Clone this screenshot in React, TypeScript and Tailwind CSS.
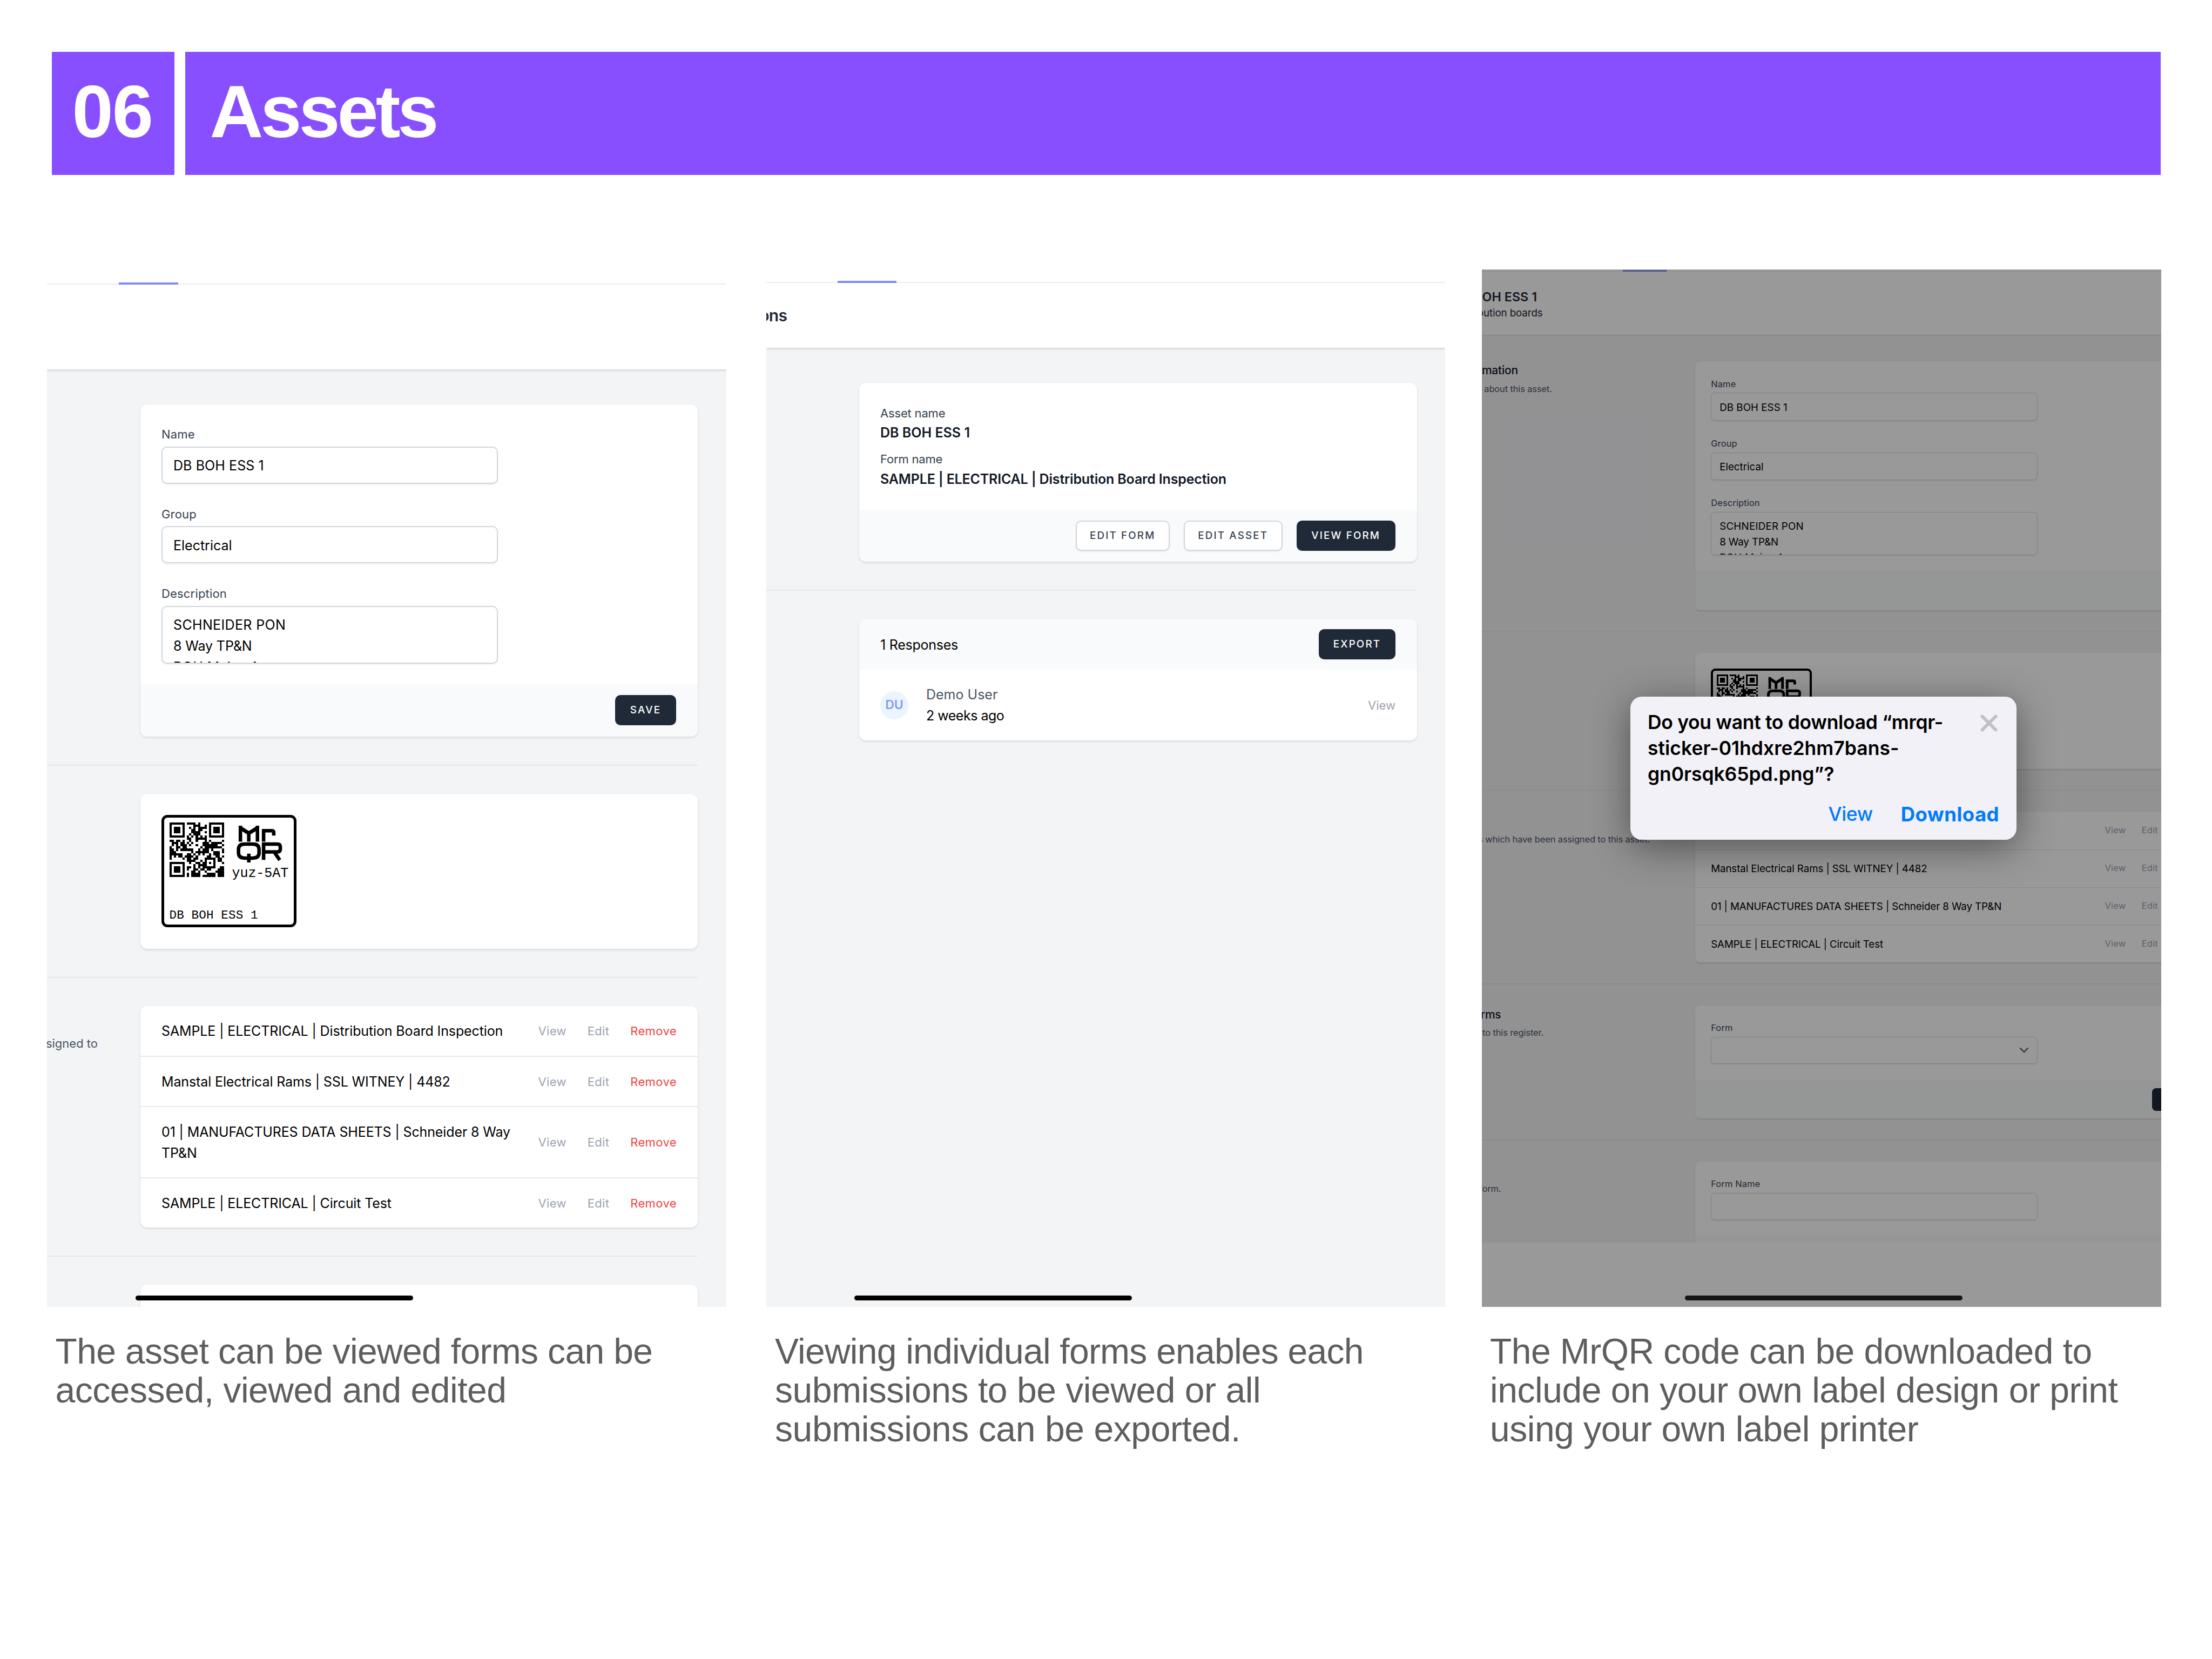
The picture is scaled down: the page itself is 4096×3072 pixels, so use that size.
import type { ReactNode } from "react";

const QR_ROWS: number[][] = [
  [8, 9, 10, 11, 13],
  [11, 12, 13, 16],
  [9, 11, 13, 14, 15, 16],
  [10, 11, 13, 14],
  [10, 11, 12, 13, 16],
  [9, 11, 12, 13],
  [8, 10, 12, 14, 16],
  [8, 9, 12, 13, 14, 15, 16],
  [0, 1, 3, 4, 6, 9, 12, 16, 18, 24],
  [1, 2, 3, 5, 6, 8, 10, 15, 16, 17, 19, 20, 21, 22, 23],
  [1, 3, 5, 6, 7, 9, 12, 15, 16, 17, 18, 19, 20, 21, 24],
  [0, 3, 4, 6, 7, 14, 16, 17, 18, 19, 20, 21, 22, 23],
  [0, 1, 3, 5, 6, 7, 8, 9, 10, 13, 15, 16, 17, 19, 24],
  [0, 1, 2, 10, 12, 13, 14, 15, 16, 17, 20, 21, 22, 24],
  [0, 1, 2, 3, 4, 5, 8, 9, 11, 13, 15, 18, 20, 21, 22],
  [0, 2, 4, 5, 7, 8, 9, 10, 12, 17, 18, 21, 22, 24],
  [0, 6, 8, 9, 11, 12, 16, 17, 18, 19, 20, 22, 23],
  [8, 9, 10, 11, 14, 16, 20, 22, 23],
  [9, 12, 13, 15, 16, 18, 20, 24],
  [11, 13, 14, 15, 16, 20],
  [8, 9, 11, 13, 15, 16, 17, 18, 19, 20, 23, 24],
  [8, 11, 12, 14, 15, 17, 18, 22, 23, 24],
  [10, 11, 13, 16, 21, 22, 23, 24],
  [8, 10, 11, 12, 13, 17, 18, 19, 20, 22, 23, 24],
  [8, 10, 11, 12, 13, 15, 16, 17, 18, 19, 20, 22, 23, 24],
];

function Finder({ x, y }: { x: number; y: number }) {
  return (
    <g>
      <rect x={x + 0.5} y={y + 0.5} width={6} height={6} fill="none" stroke="#000" strokeWidth={1} />
      <rect x={x + 2} y={y + 2} width={3} height={3} />
    </g>
  );
}

function QrCode() {
  return (
    <svg viewBox="0 0 25 25" className="size-[101px] shrink-0" shapeRendering="crispEdges">
      <Finder x={0} y={0} />
      <Finder x={18} y={0} />
      <Finder x={0} y={18} />
      {QR_ROWS.map((cols, y) => cols.map((x) => <rect key={`${x}-${y}`} x={x} y={y} width={1} height={1} />))}
    </svg>
  );
}

function MrQrLogo() {
  return (
    <svg viewBox="562 124 320 256" className="h-[69.6px] w-[87px] shrink-0" fill="none" stroke="#000" strokeWidth={24}>
      <path d="M592 236V128M708 236V128M649 236V174" />
      <path d="M586 139L649 179L714 139" strokeWidth={26} />
      <path d="M750 236V162H806Q819 162 819 175V195" />
      <path d="M620 253H678Q719 253 719 290V311Q719 348 678 348H620Q579 348 579 311V290Q579 253 620 253Z" />
      <path d="M649.500 318V378" />
      <path d="M750 360V253H842Q864 253 864 272V287Q864 306 842 306H752M822 306L860 362" />
    </svg>
  );
}

function Sticker() {
  return (
    <div className="flex h-[208.600px] w-[250px] flex-col rounded-[11px] border-[5.500px] border-black bg-white font-['Liberation_Mono',monospace]">
      <div className="flex pt-[9px] pl-[9.500px]">
        <QrCode />
        <div className="ml-[15px] flex w-[106px] flex-col">
          <div className="pt-[5px] pl-[7px]">
            <MrQrLogo />
          </div>
          <div className="mt-[3px] text-[25px] leading-[36px] tracking-[-0.002em] whitespace-nowrap">yuz-5AT</div>
        </div>
      </div>
      <div className="mt-auto pb-[2px] pl-[9.500px] text-[22.500px] leading-[30px] tracking-[0.008em] whitespace-nowrap">DB BOH ESS 1</div>
    </div>
  );
}

const CARD = "shrink-0 overflow-hidden rounded-[13px] bg-white";
const CARD_SHADOW = "shrink-0 rounded-[13px] shadow-[0_2px_4px_rgba(0,0,0,0.12)]";

function Card({ className, children }: { className: string; children: ReactNode }) {
  return (
    <div className={CARD_SHADOW}>
      <div className={`${CARD} ${className}`}>{children}</div>
    </div>
  );
}

function Divider({ className = "mr-[53px]" }: { className?: string }) {
  return (
    <div className={`flex h-[106px] shrink-0 items-center ${className}`}>
      <div className="h-[2px] w-full bg-[#e5e7eb]" />
    </div>
  );
}

function DarkButton({ children, className }: { children?: ReactNode; className: string }) {
  return (
    <div className={`flex h-[56px] items-center justify-center rounded-[10px] bg-[#1f2937] pt-px text-[18.800px] font-[550] tracking-[0.115em] whitespace-nowrap text-white ${className}`}>
      {children}
    </div>
  );
}

function LightButton({ children, className }: { children: ReactNode; className: string }) {
  return (
    <div className={`flex h-[56px] items-center justify-center rounded-[10px] border-2 border-[#d1d5db] bg-white pt-px text-[18.800px] font-[550] tracking-[0.115em] whitespace-nowrap text-[#374151] shadow-[0_2px_3px_rgba(0,0,0,0.06)] ${className}`}>
      {children}
    </div>
  );
}

function Label({ children }: { children: ReactNode }) {
  return <div className="pt-px text-[22px] leading-[32.500px] tracking-[0.008em] text-[#374151]">{children}</div>;
}

const BOX = "mt-[6px] rounded-[10px] border-2 border-[#d1d5db] bg-white shadow-[0_2px_3px_rgba(0,0,0,0.06)]";

function Field({ label, value, width, tracking }: { label: string; value: string; width: string; tracking: string }) {
  return (
    <div>
      <Label>{label}</Label>
      <div className={`${BOX} flex h-[69px] items-center px-[20px] pt-[4px] text-[25px] text-black ${tracking} ${width}`}>{value}</div>
    </div>
  );
}

function AssetFormCard({ card, input }: { card: string; input: string }) {
  return (
    <Card className={`h-[615px] ${card}`}>
      <div className="flex h-[518px] flex-col gap-[39px] px-[39px] pt-[38.500px]">
        <Field label="Name" value="DB BOH ESS 1" width={input} tracking="tracking-[0.003em]" />
        <Field label="Group" value="Electrical" width={input} tracking="tracking-[0em]" />
        <div>
          <Label>Description</Label>
          <div className={`${BOX} h-[107px] overflow-hidden px-[20px] pt-[14px] text-[25px] leading-[39px] tracking-[0.014em] text-black ${input}`}>
            <div>SCHNEIDER PON</div>
            <div className="tracking-[-0.005em]">8 Way TP&amp;N</div>
            <div>BOH Mains A</div>
          </div>
        </div>
      </div>
      <div className="flex h-[97px] items-center justify-end bg-[#f9fafb] pr-[40px]">
        <DarkButton className="w-[113px]">SAVE</DarkButton>
      </div>
    </Card>
  );
}

function StickerCard({ card }: { card: string }) {
  return (
    <Card className={`h-[287px] p-[39px] ${card}`}>
      <Sticker />
    </Card>
  );
}

function AssignedForms({ card, rows, divided }: { card: string; rows: string[]; divided: string }) {
  return (
    <Card className={card}>
      {rows.map((row, i) => (
        <div key={row} className={`flex items-center border-[#e5e7eb] px-[39px] ${i > 0 ? `border-t-2 ${divided}` : "pt-[26.500px] pb-[26px]"}`}>
          <div className="min-w-0 flex-1 pt-[1px] text-[25px] leading-[39px] tracking-[-0.005em] text-black">{row}</div>
          <div className="ml-[16px] flex gap-[39px] text-[22px] leading-[32px] tracking-[0.014em] text-[#9ca3af]">
            <span>View</span>
            <span>Edit</span>
            <span className="tracking-[0.018em] text-[#ef4444]">Remove</span>
          </div>
        </div>
      ))}
    </Card>
  );
}

function HomeBar({ color, left }: { color: string; left: string }) {
  return <div className={`absolute bottom-[12px] z-20 h-[9px] w-[514px] rounded-full ${color} ${left}`} />;
}

function Caption({ className, children }: { className: string; children: ReactNode }) {
  return (
    <div className={`mt-[46px] font-['Liberation_Sans',sans-serif] text-[66px] leading-[72.200px] whitespace-nowrap text-[#5e5e5e] ${className}`}>
      {children}
    </div>
  );
}

function AssetPanel() {
  return (
    <div className="relative flex h-[1921px] w-[1258px] flex-col overflow-hidden bg-white">
      <div className="flex h-[28px] shrink-0 items-end border-b-2 border-[#eeeff1]">
        <div className="relative top-[2px] ml-[133px] h-[4px] w-[110px] bg-[#818cf8]" />
      </div>
      <div className="z-10 h-[156.500px] shrink-0 bg-white shadow-[0_2px_4px_rgba(0,0,0,0.14)]" />
      <div className="flex grow flex-col bg-[#f3f4f6] pt-[65px]">
        <div className="flex justify-end pr-[53px]">
          <AssetFormCard card="w-[1032px]" input="w-[623px]" />
        </div>
        <Divider />
        <div className="flex justify-end pr-[53px]">
          <StickerCard card="w-[1032px]" />
        </div>
        <Divider />
        <div className="flex pr-[53px]">
          <div className="flex w-[173px] shrink-0 overflow-hidden">
            <div className="flex w-[94px] justify-end overflow-hidden pt-[53px] text-[22px] leading-[32px] whitespace-nowrap text-[#4b5563]">signed to</div>
          </div>
          <AssignedForms
            card="w-[1032px]"
            divided="py-[25.500px]"
            rows={[
              "SAMPLE | ELECTRICAL | Distribution Board Inspection",
              "Manstal Electrical Rams | SSL WITNEY | 4482",
              "01 | MANUFACTURES DATA SHEETS | Schneider 8 Way TP&N",
              "SAMPLE | ELECTRICAL | Circuit Test",
            ]}
          />
        </div>
        <Divider />
        <div className="flex justify-end pr-[53px]">
          <Card className="h-[200px] w-[1032px]">{null}</Card>
        </div>
      </div>
      <HomeBar color="bg-black" left="left-[164px]" />
    </div>
  );
}

function FormPanel() {
  return (
    <div className="relative flex h-[1921px] w-[1257px] flex-col overflow-hidden bg-white">
      <div className="flex h-[24.500px] shrink-0 items-end border-b-2 border-[#eeeff1]">
        <div className="relative top-[2px] ml-[132px] h-[4px] w-[109px] bg-[#818cf8]" />
      </div>
      <div className="z-10 flex h-[120.500px] shrink-0 bg-white pt-[38px] shadow-[0_2px_4px_rgba(0,0,0,0.14)]">
        <div className="flex h-[45px] w-[38.500px] justify-end overflow-hidden text-[30px] leading-[45px] font-semibold tracking-[-0.020em] text-[#1f2937]">ons</div>
      </div>
      <div className="flex grow flex-col bg-[#f3f4f6] pt-[65px]">
        <div className="flex justify-end pr-[52px]">
          <Card className="h-[330.500px] w-[1033px]">
            <div className="flex h-[235px] flex-col px-[39px] pt-[39.500px] text-[25px] leading-[39px] font-semibold tracking-[-0.007em] text-[#111827]">
              <div className="text-[22px] leading-[32.500px] font-normal text-[#374151]">Asset name</div>
              <div className="pt-px tracking-[0em]">DB BOH ESS 1</div>
              <div className="mt-[13px] text-[22px] leading-[32.500px] font-normal text-[#374151]">Form name</div>
              <div className="pt-px">SAMPLE | ELECTRICAL | Distribution Board Inspection</div>
            </div>
            <div className="flex h-[95.500px] items-center justify-end gap-[26px] bg-[#f9fafb] pr-[40px]">
              <LightButton className="w-[174.500px]">EDIT FORM</LightButton>
              <LightButton className="w-[182.500px]">EDIT ASSET</LightButton>
              <DarkButton className="w-[183.500px]">VIEW FORM</DarkButton>
            </div>
          </Card>
        </div>
        <Divider className="mr-[52px]" />
        <div className="flex justify-end pr-[52px]">
          <Card className="h-[225.500px] w-[1033px]">
            <div className="flex h-[94.500px] items-center justify-between bg-[#f9fafb] pr-[40px] pl-[39px]">
              <div className="pt-[3px] text-[25px] tracking-[-0.010em] text-black">1 Responses</div>
              <DarkButton className="w-[142px]">EXPORT</DarkButton>
            </div>
            <div className="flex h-[131px] items-center pr-[40px] pl-[39px]">
              <div className="flex size-[52px] items-center justify-center rounded-full bg-[#ebf4ff] text-[23px] font-semibold text-[#7f9cf5]">DU</div>
              <div className="ml-[33px] flex-1 pt-[1px] text-[25px] leading-[39px] text-black">
                <div className="text-[#4b5563]">Demo User</div>
                <div className="tracking-[-0.020em]">2 weeks ago</div>
              </div>
              <div className="pt-[1px] text-[22px] text-[#9ca3af]">View</div>
            </div>
          </Card>
        </div>
      </div>
      <HomeBar color="bg-black" left="left-[162.500px]" />
    </div>
  );
}

function SideNote({ title, titleWidth, note, noteWidth }: { title?: string; titleWidth?: string; note?: string; noteWidth?: string }) {
  return (
    <div className="w-[528px] shrink-0 whitespace-nowrap">
      <div className={`mt-[3px] flex h-[39px] justify-end overflow-hidden text-[28px] leading-[39px] font-medium tracking-[-0.010em] text-[#111827] ${titleWidth ?? ""}`}>{title}</div>
      <div className={`mt-[11px] flex justify-end overflow-hidden text-[22px] leading-[32px] tracking-[-0.008em] text-[#4b5563] ${noteWidth ?? ""}`}>{note}</div>
    </div>
  );
}

function DownloadPanel() {
  return (
    <div className="relative h-[1921px] w-[1258px] overflow-hidden bg-white">
      <div className="flex h-[2565px] w-[1680px] flex-col overflow-hidden [zoom:0.749]">
        <div className="flex h-[5px] shrink-0 items-end border-b-2 border-[#eeeff1]">
          <div className="relative top-[2px] ml-[349px] h-[4px] w-[108px] bg-[#818cf8]" />
        </div>
        <div className="z-10 h-[157px] shrink-0 bg-white pt-[43px] whitespace-nowrap shadow-[0_2px_4px_rgba(0,0,0,0.14)]">
          <div className="flex w-[137px] justify-end overflow-hidden text-[31px] leading-[42px] font-semibold tracking-[0.004em] text-[#1f2937]">OH ESS 1</div>
          <div className="flex w-[151px] justify-end overflow-hidden pt-px text-[25px] leading-[36px] tracking-[-0.005em] text-[#1f2937]">bution boards</div>
        </div>
        <div className="flex h-[2244px] shrink-0 flex-col overflow-hidden bg-[#f3f4f6] pt-[65px]">
          <div className="flex">
            <SideNote title="mation" titleWidth="w-[90px]" note="about this asset." noteWidth="w-[174px]" />
            <AssetFormCard card="w-[1308px]" input="w-[807px]" />
          </div>
          <Divider className="" />
          <div className="flex">
            <SideNote />
            <StickerCard card="w-[1308px]" />
          </div>
          <Divider className="" />
          <div className="flex">
            <SideNote note="s which have been assigned to this asset." noteWidth="w-[416px]" />
            <AssignedForms
              card="w-[1308px]"
              divided="py-[26px]"
              rows={[
                "SAMPLE | ELECTRICAL | Distribution Board Inspection",
                "Manstal Electrical Rams | SSL WITNEY | 4482",
                "01 | MANUFACTURES DATA SHEETS | Schneider 8 Way TP&N",
                "SAMPLE | ELECTRICAL | Circuit Test",
              ]}
            />
          </div>
          <Divider className="" />
          <div className="flex">
            <SideNote title="orms" titleWidth="w-[48px]" note="to this register." noteWidth="w-[153px]" />
            <Card className="h-[280px] w-[1308px]">
              <div className="h-[186px] px-[39px] pt-[38px]">
                <Label>Form</Label>
                <div className={`${BOX} flex h-[67px] w-[807px] items-center justify-end pr-[20px]`}>
                  <svg viewBox="0 0 24 16" className="h-[16px] w-[24px]" fill="none" stroke="#6b7280" strokeWidth={3.5} strokeLinecap="round" strokeLinejoin="round">
                    <path d="M3 3L12 12L21 3" />
                  </svg>
                </div>
              </div>
              <div className="flex h-[94px] items-center justify-end bg-[#f9fafb] pr-[39px]">
                <DarkButton className="w-[139px]" />
              </div>
            </Card>
          </div>
          <Divider className="h-[105px]" />
          <div className="flex">
            <SideNote note="form." noteWidth="w-[48px]" />
            <Card className="h-[280px] w-[1308px]">
              <div className="h-[183px] px-[39px] pt-[38px]">
                <Label>Form Name</Label>
                <div className={`${BOX} h-[67px] w-[807px]`} />
              </div>
              <div className="h-[97px] bg-[#f9fafb]" />
            </Card>
          </div>
        </div>
      </div>
      <div className="absolute inset-0 z-10 bg-black/40" />
      <HomeBar color="bg-[#161616]" left="left-[376px]" />
      <div className="absolute top-[790.500px] left-[275.500px] z-20 flex h-[265.500px] w-[715px] flex-col rounded-[21px] bg-[#f2f1f7] px-[33px] pt-[24px] shadow-[0_14px_70px_rgba(0,0,0,0.45)]">
        <div className="flex items-start justify-between">
          <div className="-ml-[1px] text-[35.500px] leading-[48px] font-semibold whitespace-nowrap text-black">
            <div className="tracking-[-0.0095em]">Do you want to download “mrqr-</div>
            <div className="tracking-[0em]">sticker-01hdxre2hm7bans-</div>
            <div className="tracking-[-0.003em]">gn0rsqk65pd.png”?</div>
          </div>
          <svg viewBox="0 0 32 32" className="mt-[9px] mr-[2px] size-[32px]" fill="none" stroke="#c0bfc5" strokeWidth={6} strokeLinecap="round">
            <path d="M3.500 3.500L28.500 28.500M28.500 3.500L3.500 28.500" />
          </svg>
        </div>
        <div className="mt-[26px] mr-[-1px] flex justify-end gap-[52px] text-[35.500px] leading-[48px] text-[#007aff]">
          <span className="font-medium tracking-[-0.012em]">View</span>
          <span className="text-[36.500px] font-bold tracking-[0.012em]">Download</span>
        </div>
      </div>
    </div>
  );
}

export default function App() {
  return (
    <div className="flex h-[3072px] w-[4096px] flex-col overflow-hidden bg-white pt-[95.500px] pl-[87px] font-['Inter',sans-serif]">
      <div className="ml-[8.500px] flex h-[228.500px] w-[3905px] shrink-0 gap-[19.500px] font-['Liberation_Sans',sans-serif] text-[137px] leading-[221px] font-bold text-white">
        <div className="w-[227.500px] bg-[#874fff] pl-[38px] tracking-[-0.015em]">06</div>
        <div className="flex-1 bg-[#874fff] pl-[46px] tracking-[-0.037em]">Assets</div>
      </div>
      <div className="mt-[175px] flex shrink-0">
        <div className="w-[1332px] shrink-0">
          <AssetPanel />
          <Caption className="pl-[15.500px]">
            <div className="tracking-[-0.0102em]">The asset can be viewed forms can be</div>
            <div className="tracking-[-0.007em]">accessed, viewed and edited</div>
          </Caption>
        </div>
        <div className="w-[1324.500px] shrink-0">
          <FormPanel />
          <Caption className="pl-[16px]">
            <div className="tracking-[-0.0115em]">Viewing individual forms enables each</div>
            <div className="tracking-[-0.007em]">submissions to be viewed or all</div>
            <div className="tracking-[-0.006em]">submissions can be exported.</div>
          </Caption>
        </div>
        <div className="w-[1258px] shrink-0">
          <DownloadPanel />
          <Caption className="pl-[15.500px]">
            <div className="tracking-[-0.0085em]">The MrQR code can be downloaded to</div>
            <div className="tracking-[-0.007em]">include on your own label design or print</div>
            <div className="tracking-[-0.0075em]">using your own label printer</div>
          </Caption>
        </div>
      </div>
    </div>
  );
}
